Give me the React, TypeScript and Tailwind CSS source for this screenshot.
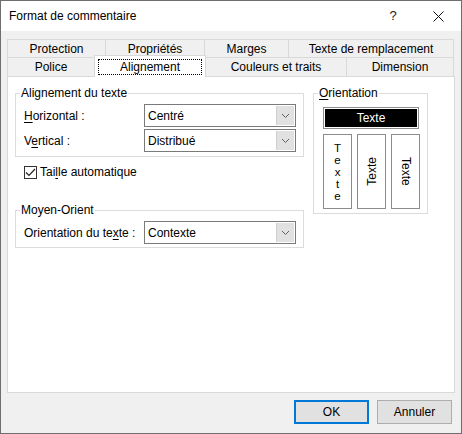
import { type ReactNode } from "react";

const font = "font-['Liberation_Sans',Arial,sans-serif]";

function Select({ value }: { value: string }) {
  return (
    <div className="flex h-[23px] w-[152px] border border-[#7a7a7a] bg-white">
      <div className="flex flex-1 items-center pl-[3px] text-black">{value}</div>
      <div className="m-px flex w-[18px] items-center justify-center border-l border-[#cfcfcf] bg-[#e1e1e1]">
        <svg width="9" height="6" viewBox="0 0 9 6">
          <path d="M1 1 L4.5 4.5 L8 1" fill="none" stroke="#606060" strokeWidth="1" />
        </svg>
      </div>
    </div>
  );
}

function Group({ legend, className, children }: { legend: ReactNode; className?: string; children: ReactNode }) {
  return (
    <fieldset className={`border border-[#dcdcdc] ${className ?? ""}`}>
      <legend className="ml-[4px] px-[1px] leading-[14px]">{legend}</legend>
      {children}
    </fieldset>
  );
}

const row1 = [
  { label: "Protection", w: "w-[98px]" },
  { label: "Propriétés", w: "w-[99px]" },
  { label: "Marges", w: "w-[84px]" },
  { label: "Texte de remplacement", w: "w-[166px]" },
];

export default function App() {
  return (
    <div className={`${font} text-[12px] text-black w-[462px] h-[434px] bg-[#f0f0f0] border border-[#6e6e6e] flex flex-col`}>
      {/* title bar */}
      <div className="flex h-[30px] items-center bg-white pl-[8px]">
        <span className="flex-1">Format de commentaire</span>
        <span className="flex w-[44px] justify-center text-[13px] text-[#222]">?</span>
        <div className="flex w-[46px] items-center justify-center">
          <svg width="11" height="11" viewBox="0 0 11 11">
            <path d="M0.5 0.5 L10.5 10.5 M10.5 0.5 L0.5 10.5" stroke="#111" strokeWidth="1" />
          </svg>
        </div>
      </div>

      <div className="mx-[6px] mt-[8px]">
        {/* tabs back row */}
        <div className="flex h-[18px]">
          {row1.map((t, i) => (
            <div
              key={t.label}
              className={`${t.w} flex items-center justify-center border-t border-l border-[#d9d9d9] ${i === row1.length - 1 ? "border-r" : ""}`}
            >
              {t.label}
            </div>
          ))}
        </div>
        {/* tabs front row */}
        <div className="flex h-[19px] items-end">
          <div className="flex h-[19px] w-[87px] items-center justify-center border-t border-l border-[#d9d9d9]">
            Police
          </div>
          <div className="relative z-10 -mb-px flex h-[22px] w-[112px] items-start justify-center border-x border-t border-[#d9d9d9] bg-white px-[3px] pt-[3px]">
            <div className="flex h-[16px] w-full items-center justify-center border border-dotted border-black">
              Alignement
            </div>
          </div>
          <div className="flex h-[19px] w-[140px] items-center justify-center border-t border-[#d9d9d9]">
            Couleurs et traits
          </div>
          <div className="flex h-[19px] w-[108px] items-center justify-center border-t border-x border-[#d9d9d9]">
            Dimension
          </div>
        </div>

        {/* panel */}
        <div className="flex h-[317px] items-start gap-[9px] border border-[#d9d9d9] bg-white pl-[7px] pt-[9px]">
          <div className="flex w-[289px] flex-col">
            <Group legend="Alignement du texte">
              <div className="grid grid-cols-[120px_152px] items-center gap-y-[2px] pl-[8px] pt-[4px] pb-[4px]">
                <span>
                  <span className="underline underline-offset-2">H</span>orizontal :
                </span>
                <Select value="Centré" />
                <span>
                  V<span className="underline underline-offset-2">e</span>rtical :
                </span>
                <Select value="Distribué" />
              </div>
            </Group>

            <div className="mt-[6px] flex items-center gap-[3px] pl-[9px]">
              <div className="flex h-[13px] w-[13px] items-center justify-center border border-[#333]">
                <svg width="11" height="9" viewBox="0 0 11 9">
                  <path d="M1 4.5 L4 7.5 L10 1" fill="none" stroke="#222" strokeWidth="1.2" />
                </svg>
              </div>
              <span>
                Tai<span className="underline underline-offset-2">l</span>le automatique
              </span>
            </div>

            <Group legend="Moyen-Orient" className="mt-[22px]">
              <div className="grid grid-cols-[120px_152px] items-center pl-[8px] pt-[4px] pb-[3px]">
                <span>
                  Orientation du te<span className="underline underline-offset-2">x</span>te :
                </span>
                <Select value="Contexte" />
              </div>
            </Group>
          </div>

          <Group
            legend={
              <>
                <span className="underline underline-offset-2">O</span>rientation
              </>
            }
            className="w-[115px]"
          >
            <div className="flex flex-col pl-[9px] pt-[7px] pb-[4px]">
              <div className="h-[22px] w-[96px] border border-[#8c8c8c] bg-white p-px">
                <div className="flex h-full items-center justify-center bg-black text-white">Texte</div>
              </div>
              <div className="mt-[5px] flex gap-[5px]">
                <div className="flex h-[75px] w-[29px] flex-col items-center justify-center border border-[#8c8c8c] text-[11.5px] leading-[12px]">
                  {"Texte".split("").map((c, i) => (
                    <span key={i} className="block h-[12px]">
                      {c}
                    </span>
                  ))}
                </div>
                <div className="flex h-[75px] w-[29px] items-center justify-center border border-[#8c8c8c]">
                  <span className="rotate-180 [writing-mode:vertical-rl]">Texte</span>
                </div>
                <div className="flex h-[75px] w-[29px] items-center justify-center border border-[#8c8c8c]">
                  <span className="[writing-mode:vertical-rl]">Texte</span>
                </div>
              </div>
            </div>
          </Group>
        </div>
      </div>

      {/* buttons */}
      <div className="mt-[7px] flex justify-end gap-[8px] pr-[9px]">
        <button className="h-[24px] w-[75px] border-2 border-[#0078d7] bg-[#e1e1e1]">OK</button>
        <button className="h-[24px] w-[75px] border border-[#adadad] bg-[#e1e1e1]">Annuler</button>
      </div>
    </div>
  );
}
